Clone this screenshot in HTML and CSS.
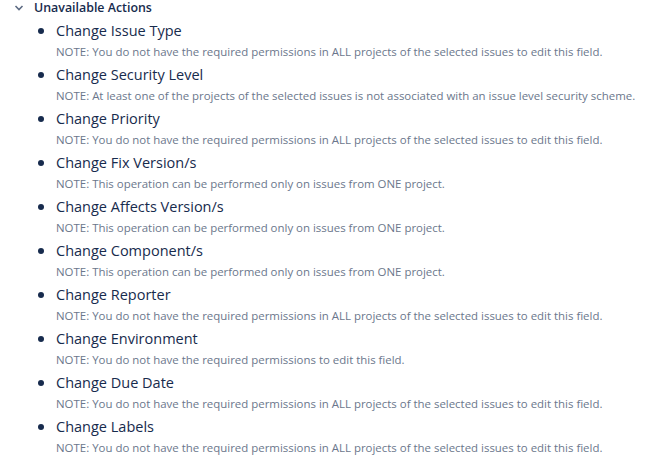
FILE: index.html
```html
<!DOCTYPE html>
<html lang="en">
<head>
    <meta charset="UTF-8">
    <title>Unavailable Actions</title>
    <link rel="stylesheet" href="styles.css">
</head>
<body>
    <div id="main">
        <div class="heading">
            <svg class="chevron" width="10" height="10" viewBox="0 0 10 10"><path d="M1.5 3 L5 6.5 L8.5 3" fill="none" stroke="#5e6c84" stroke-width="1.6"/></svg>
            <span>Unavailable Actions</span>
        </div>
        <ul class="actions">
            <li>
                <div class="name">Change Issue Type</div>
                <div class="note">NOTE: You do not have the required permissions in ALL projects of the selected issues to edit this field.</div>
            </li>
            <li>
                <div class="name">Change Security Level</div>
                <div class="note">NOTE: At least one of the projects of the selected issues is not associated with an issue level security scheme.</div>
            </li>
            <li>
                <div class="name">Change Priority</div>
                <div class="note">NOTE: You do not have the required permissions in ALL projects of the selected issues to edit this field.</div>
            </li>
            <li>
                <div class="name">Change Fix Version/s</div>
                <div class="note">NOTE: This operation can be performed only on issues from ONE project.</div>
            </li>
            <li>
                <div class="name">Change Affects Version/s</div>
                <div class="note">NOTE: This operation can be performed only on issues from ONE project.</div>
            </li>
            <li>
                <div class="name">Change Component/s</div>
                <div class="note">NOTE: This operation can be performed only on issues from ONE project.</div>
            </li>
            <li>
                <div class="name">Change Reporter</div>
                <div class="note">NOTE: You do not have the required permissions in ALL projects of the selected issues to edit this field.</div>
            </li>
            <li>
                <div class="name">Change Environment</div>
                <div class="note">NOTE: You do not have the required permissions to edit this field.</div>
            </li>
            <li>
                <div class="name">Change Due Date</div>
                <div class="note">NOTE: You do not have the required permissions in ALL projects of the selected issues to edit this field.</div>
            </li>
            <li>
                <div class="name">Change Labels</div>
                <div class="note">NOTE: You do not have the required permissions in ALL projects of the selected issues to edit this field.</div>
            </li>
        </ul>
    </div>
</body>
</html>
```

FILE: styles.css
```css
body{
    margin: 0;
    background: #fff;
    font-family: "Open Sans", "Liberation Sans", sans-serif;
    color: #172b4d;
}
.heading{
    display: flex;
    align-items: center;
    gap: 10px;
    padding-left: 14px;
    height: 16px;
    font-size: 12.4px;
    font-weight: 600;
    span{
        line-height: 16px;
    }
}
.actions{
    margin: 0;
    padding-left: 56px;
    li{
        height: 44px;
        list-style: disc;
        color: #172b4d;
    }
    .name{
        padding-top: 5px;
        font-size: 14.5px;
        line-height: 20px;
    }
    .note{
        margin-top: 3px;
        font-size: 11.45px;
        line-height: 16px;
        color: #6b778c;
    }
}
```
